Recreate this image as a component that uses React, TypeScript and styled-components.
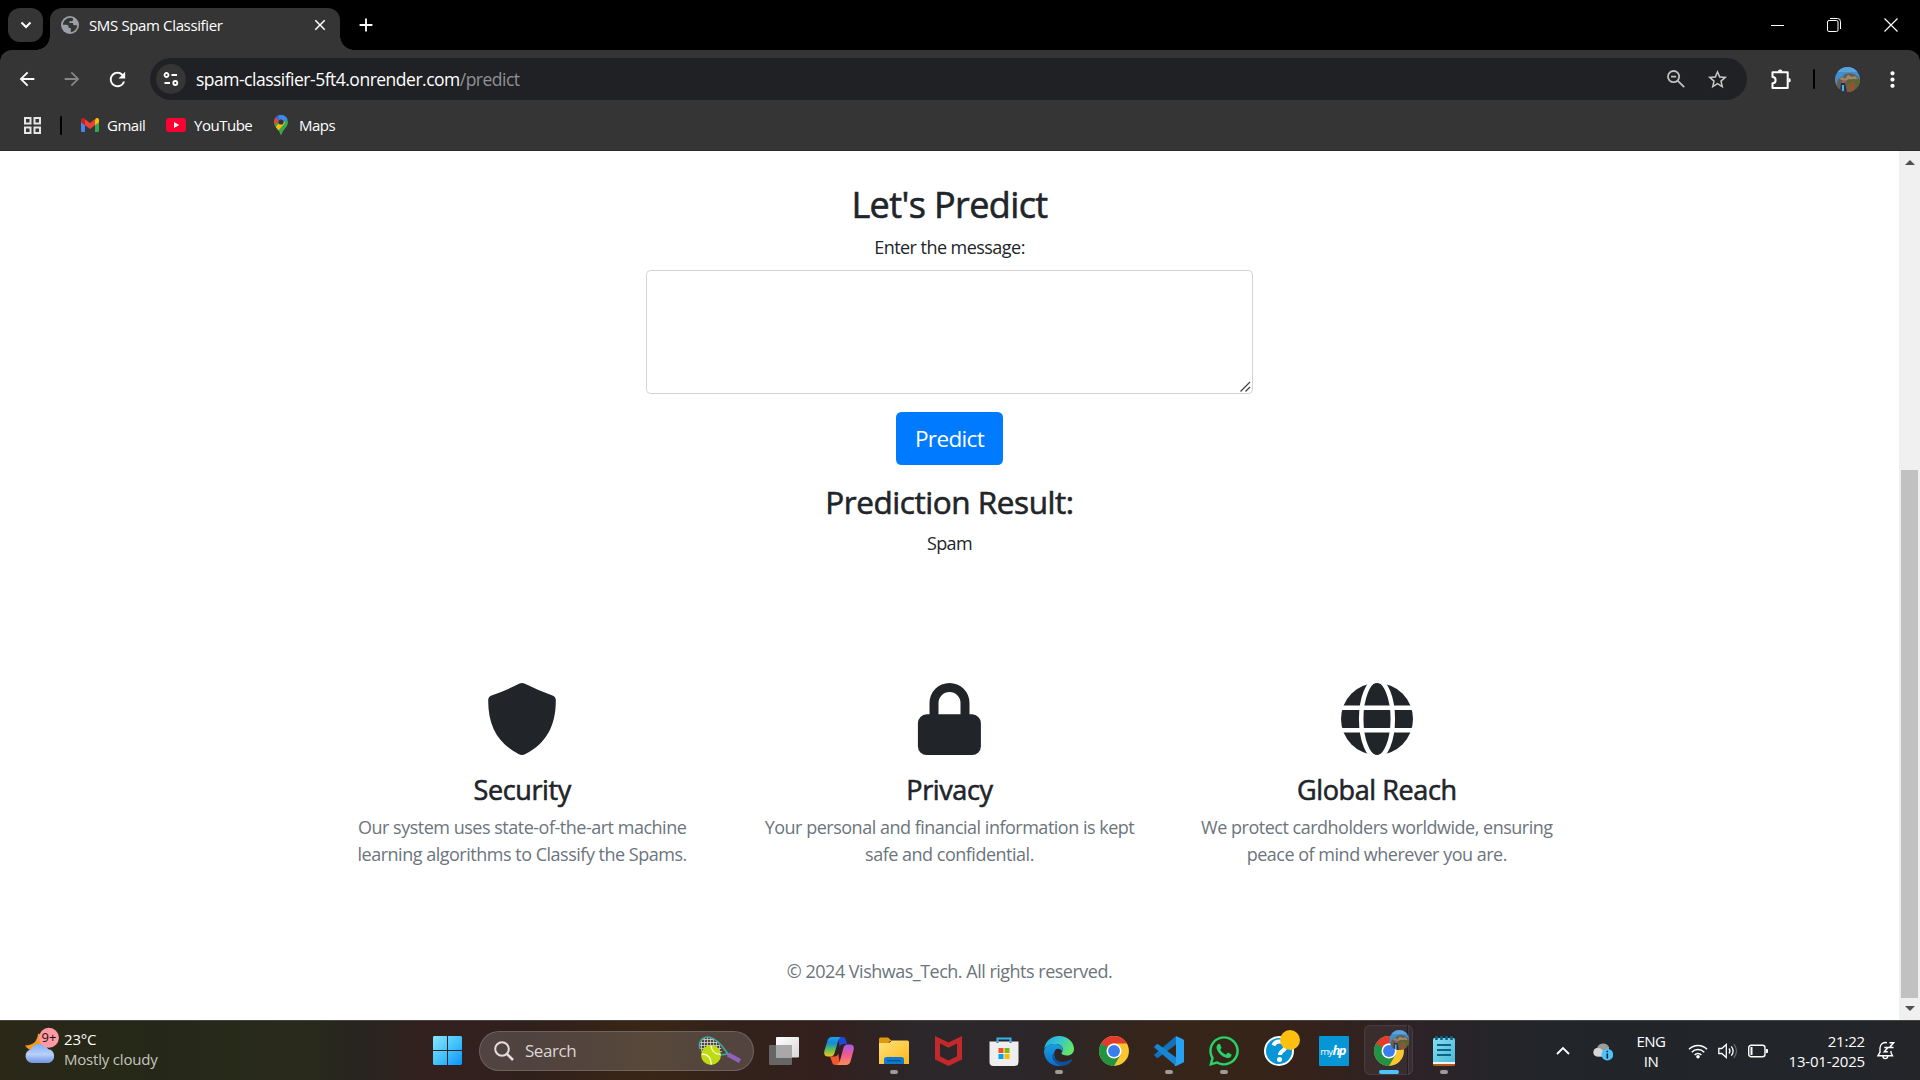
import React from 'react';
import styled, { createGlobalStyle } from 'styled-components';
import {
  MdArrowBack, MdArrowForward, MdRefresh, MdClose, MdAdd, MdStarBorder, MdMoreVert,
} from 'react-icons/md';
import { FaWhatsapp } from 'react-icons/fa';

const Global = createGlobalStyle`
  *, *::before, *::after { box-sizing: border-box; }
  body { margin: 0; background: #fff; font-family: "Open Sans", "Noto Sans", sans-serif; overflow: hidden; }
  svg { display: block; flex: none; }
`;

const Screen = styled.div`
  width: 1920px; height: 1080px; display: flex; flex-direction: column; overflow: hidden; background: #000;
`;

/* ---------- browser chrome ---------- */
const TabStrip = styled.div`
  height: 50px; background: #000; display: flex; padding: 8px 0 0 8px; align-items: flex-start;
`;
const TabSearch = styled.div`
  width: 35px; height: 34px; border-radius: 12px; background: #353535; color: #fff;
  display: flex; align-items: center; justify-content: center;
`;
const Tab = styled.div`
  position: relative; width: 290px; height: 42px; margin-left: 7px; background: #353535;
  border-radius: 12px 12px 0 0; display: flex; align-items: center; padding: 0 11px 8px 11px; color: #fff;
  &::before, &::after { content: ''; position: absolute; bottom: 0; width: 14px; height: 14px; }
  &::before { left: -14px; background: radial-gradient(circle at 0 0, transparent 13.5px, #353535 14px); }
  &::after { right: -14px; background: radial-gradient(circle at 100% 0, transparent 13.5px, #353535 14px); }
`;
const TabTitle = styled.span`
  flex: 1; margin-left: 10px; font-size: 15px; line-height: 20px; letter-spacing: -0.36px; white-space: nowrap;
`;
const NewTab = styled.div`
  margin-left: 14px; width: 24px; height: 34px; display: flex; align-items: center; justify-content: center; color: #fff;
`;
const WindowControls = styled.div`
  margin-left: auto; display: flex; height: 33px; align-items: center; gap: 43px; padding-right: 22px;
`;

const Toolbar = styled.div`
  height: 58px; background: #353535; border-radius: 12px 12px 0 0; display: flex; align-items: center; color: #fff;
  padding-left: 16px;
`;
const NavButtons = styled.div`
  display: flex; gap: 23px; width: 134px;
  svg:nth-child(2) { color: #858585; }
`;
const Omnibox = styled.div`
  width: 1597px; height: 42px; border-radius: 21px; background: #202124; display: flex; align-items: center;
  padding: 0 18px 0 6px;
`;
const SiteInfo = styled.div`
  width: 30px; height: 30px; border-radius: 50%; background: #353535; display: flex; align-items: center; justify-content: center;
`;
const Url = styled.div`
  flex: 1; margin-left: 10px; font-size: 17.5px; line-height: 24px; letter-spacing: -0.5px; color: #fff; white-space: nowrap;
  span { color: #8f9194; }
`;
const OmniActions = styled.div`
  display: flex; align-items: center; gap: 21px; color: #c7c7c7;
`;
const ToolbarActions = styled.div`
  display: flex; align-items: center; flex: 1; padding-left: 24px;
`;
const ToolbarDivider = styled.div<{ $h?: number }>`
  width: 2px; height: ${p => p.$h ?? 20}px; background: #000; border-radius: 1px;
`;
const ProfileGroup = styled.div`
  display: flex; align-items: center; gap: 20px; margin: 0 20px 0 21px;
`;

const Bookmarks = styled.div`
  height: 43px; background: #353535; display: flex; align-items: center; padding: 0 0 8px 22.5px; color: #fff;
  border-bottom: 1px solid #2b2b2b;
  ${ToolbarDivider} { margin: 0 19px 0 18.5px; }
`;
const Bookmark = styled.div<{ $w: number; $gap: number }>`
  display: flex; align-items: center; gap: ${p => p.$gap}px; width: ${p => p.$w}px;
  font-size: 15px; line-height: 20px; letter-spacing: -0.48px; white-space: nowrap;
`;

/* ---------- page ---------- */
const Viewport = styled.div` height: 869px; display: flex; background: #fff; `;
const Page = styled.main`
  width: 1899px; display: flex; flex-direction: column; align-items: center; padding-top: 32px;
  color: #212529; font-size: 18px; line-height: 27px;
`;
const Heading = styled.h2<{ $size: number; $ls: number }>`
  margin: 0 0 8px; font-size: ${p => p.$size}px; line-height: 1.2; font-weight: 400; letter-spacing: ${p => p.$ls}px;
  -webkit-text-stroke: 0.6px #212529; white-space: nowrap;
`;
const Label = styled.label` letter-spacing: -0.54px; margin-bottom: 9px; `;
const MessageField = styled.div` position: relative; width: 607px; height: 124px; margin-bottom: 18px; `;
const Message = styled.textarea`
  width: 100%; height: 100%; border: 1px solid #ced4da; border-radius: 4.5px; resize: none; background: #fff;
  display: block; margin: 0; padding: 7px 14px; font: inherit; overflow: auto;
`;
const ResizeGrip = styled.svg` position: absolute; right: 2px; bottom: 2px; `;
const PredictButton = styled.button`
  width: 107px; height: 53px; border: 0; border-radius: 5.4px; background: #007bff; color: #fff; padding: 0;
  font-family: inherit; font-size: 22.5px; line-height: 34px; letter-spacing: -0.65px; margin-bottom: 18px;
`;
const Result = styled.p` margin: 1px 0 0; letter-spacing: -0.65px; `;
const Features = styled.section`
  width: 1282px; display: grid; grid-template-columns: repeat(3, 1fr); margin-top: 126px;
`;
const Feature = styled.div`
  display: flex; flex-direction: column; align-items: center; text-align: center;
  > svg { margin-bottom: 19px; }
`;
const FeatureText = styled.p`
  margin: 0; width: 380px; color: #6c757d; letter-spacing: -0.49px;
`;
const Footer = styled.footer` margin-top: 90px; color: #6c757d; letter-spacing: -0.5px; `;

const ScrollTrack = styled.div`
  width: 21px; background: #f0f0f0; display: flex; flex-direction: column; align-items: center; padding: 9px 0;
`;
const ScrollArrow = styled.div<{ $down?: boolean }>`
  width: 0; height: 0; border-left: 5px solid transparent; border-right: 5px solid transparent;
  ${p => (p.$down ? 'border-top: 5px solid #505050; margin-top: auto;' : 'border-bottom: 5px solid #505050;')}
`;
const ScrollThumb = styled.div` width: 17px; height: 528px; margin-top: 305px; background: #c1c1c1; `;

/* ---------- taskbar ---------- */
const Taskbar = styled.div`
  height: 60px; border-top: 1px solid #45453f; display: flex; align-items: center; color: #fff; font-size: 15px; line-height: 20px;
  background: linear-gradient(90deg, #2b2818 0, #252818 150px, #292a1b 300px, #27251f 355px, #33211f 430px, #30201c 530px,
    #392616 650px, #33221b 730px, #33201e 830px, #2b272b 920px, #2b2629 1030px, #35251a 1150px, #372418 1240px,
    #33221c 1330px, #2e2228 1410px, #242529 1500px, #21252a 1600px, #232529 1920px);
`;
const Weather = styled.div` width: 420px; display: flex; padding: 6px 0 0 25px; height: 59px; `;
const WeatherText = styled.div`
  margin: 2px 0 0 3px; letter-spacing: -0.2px; width: 120px;
  span { display: block; } span + span { color: #c5c5bf; }
`;
const TaskButton = styled.div`
  position: relative; width: 55px; height: 59px; display: flex; align-items: center; justify-content: center;
  > svg { position: relative; }
`;
const ActivePlate = styled.div`
  position: absolute; left: 3px; top: 4px; width: 49px; height: 50px; border-radius: 6px;
  background: rgba(255,255,255,.05); border: 1px solid rgba(255,255,255,.08);
  &::after { content: ''; position: absolute; left: 42px; top: -1px; width: 6px; height: 50px;
    border-left: 1px solid rgba(0,0,0,.35); box-shadow: inset 1px 0 rgba(255,255,255,.07); }
`;
const Indicator = styled.div<{ $active?: boolean }>`
  position: absolute; bottom: 6px; left: 50%; transform: translateX(-50%); height: 4px; border-radius: 2px;
  width: ${p => (p.$active ? 20 : 8)}px; background: ${p => (p.$active ? '#4cc2ff' : '#9f9b99')};
`;
const SearchBox = styled.div`
  width: 275px; height: 40px; border-radius: 20px; margin: 0 2px 0 4px; display: flex; align-items: center;
  background: rgba(255,255,255,.155); border: 1px solid rgba(255,255,255,.16); padding: 0 11px 0 14px;
  font-size: 17px; color: #dcd6d4; letter-spacing: -0.45px;
  span { flex: 1; margin-left: 11px; }
`;
const Tray = styled.div` margin-left: auto; display: flex; align-items: center; height: 59px; padding-right: 25px; `;
const OneDrive = styled.svg` margin: 3px 0 0 23px; `;
const TrayIcons = styled.div` display: flex; align-items: center; gap: 10px; margin: 0 20px 0 19px; `;
const Lang = styled.div` width: 36px; text-align: center; letter-spacing: -0.5px; margin-left: 20px; span { display: block; } `;
const Clock = styled.div`
  width: 77px; text-align: right; letter-spacing: -0.18px; margin-right: 12px; white-space: nowrap; span { display: block; }
`;

/* ---------- drawings ---------- */
const TabGlobe = () => (
  <svg width="18" height="18" viewBox="0 0 18 18">
    <circle cx="9" cy="9" r="9" fill="#9aa0a6" />
    <path d="M9.500 1.700c-4 0-7.300 3-7.600 7h3.500c1.300 0 2.200.8 2.200 2v1.300H9.800v4.300c3.400-.5 6.200-3.200 6.400-7h-2.700c-1.200 0-1.500-.7-1.500-1.700V7H8.300V5.200h2.400c.8 0 1.200-.6 1.200-1.200V2.200z" fill="#353535" />
  </svg>
);
const ZoomOut = () => (
  <svg width="18" height="18" viewBox="0 0 18 18" fill="none" stroke="#c0c0c0" strokeWidth="1.800">
    <circle cx="6.600" cy="6.600" r="5.600" /><path d="m10.600 10.600 6.600 6.600M4 6.600h5.200" />
  </svg>
);
const Puzzle = () => (
  <svg width="21" height="21" viewBox="0 0 21 21">
    <path d="M1.500 3.300h15.200v15.600H1.500v-4.600a3.100 3.100 0 0 0 0-6.200z" fill="none" stroke="#fff" strokeWidth="2" strokeLinejoin="round" />
    <path d="M6.900 2.800a2.300 2.300 0 0 1 4.600 0zM17.500 8.900a2.300 2.300 0 0 1 0 4.600z" fill="#fff" />
  </svg>
);

const Avatar = ({ id, size = 25 }: { id: string; size?: number }) => (
  <svg width={size} height={size} viewBox="0 0 25 25">
    <clipPath id={id}><circle cx="12.5" cy="12.5" r="12.5" /></clipPath>
    <g clipPath={`url(#${id})`}>
      <rect width="25" height="25" fill="#3f8fd2" />
      <rect width="25" height="5" fill="#5aa2dc" />
      <path d="M2 16 3 12l4-2 3-3 5-1 4 1 4 3 3 4v11H2z" fill="#6b5e4c" />
      <path d="m4 12 4-2 2 2 3-4 4 2 3-1 3 3-5 1-4-1-4 2-3-1z" fill="#998a6e" />
      <path d="m12 14 6-2 7 1v12H13z" fill="#56682f" />
      <path d="m13 17 5-3 3 3-2 8h-7z" fill="#8a5636" />
      <path d="M6 16h4l2 9H5z" fill="#232e5b" />
      <path d="M7 18h2v6H7z" fill="#54b8c6" />
      <circle cx="8.5" cy="14.5" r="1.6" fill="#a2605d" />
    </g>
  </svg>
);

const Chrome = ({ children }: { children?: React.ReactNode }) => (
  <svg width="30" height="30" viewBox="0 0 48 48" overflow="visible">
    <circle cx="24" cy="24" r="23.9" fill="#fbc52d" />
    <path d="M3.200 12 24 24v12l-6 11.200A24 24 0 0 1 3.200 12z" fill="#229342" />
    <path d="M13.600 30 24 36h.500l10-6L24 48q-3 0-6-.8z" fill="#229342" />
    <path d="M3.200 12a24 24 0 0 1 41.600 0H24a12 12 0 0 0-10.400 6l-.5 1z" fill="#e33b2e" />
    <path d="M3.200 12 13.600 30 14 18z" fill="#229342" />
    <circle cx="24" cy="24" r="12" fill="#fff" />
    <circle cx="24" cy="24" r="9.5" fill="#3b7ded" />
    {children}
  </svg>
);

const Gmail = () => (
  <svg width="18" height="14" viewBox="0 0 18 14">
    <path d="M0 2v10.8Q0 14 1.2 14H4V5.5z" fill="#4285f4" />
    <path d="M18 2v10.8q0 1.2-1.2 1.2H14V5.5z" fill="#34a853" />
    <path d="M14 2v5.2l4-3V2c0-2-2-2.6-3.300-1.500z" fill="#fbbc04" />
    <path d="M4 7.200V1.200l5 3.800 5-3.800v6l-5 3.900z" fill="#ea4335" />
    <path d="M0 2v2.200l4 3V1.200L3.300.5C2 -.6 0 0 0 2z" fill="#c5221f" />
  </svg>
);
const YouTube = () => (
  <svg width="20" height="14" viewBox="0 0 20 14"><rect width="20" height="14" rx="3" fill="#f03" /><path d="M8 4v6l5.200-3z" fill="#fff" /></svg>
);
const Maps = () => (
  <svg width="14" height="20" viewBox="0 0 14 20">
    <clipPath id="pin"><path d="M7 0a7 7 0 0 1 7 7c0 3-1.600 5-3.500 7.200C8.700 16.400 8 18 7.500 19.500q-.5 1-1 0C6 18 5.300 16.400 3.500 14.200 1.600 12 0 10 0 7a7 7 0 0 1 7-7z" /></clipPath>
    <g clipPath="url(#pin)">
      <rect width="14" height="20" fill="#34a853" />
      <path d="M0 14 9 3.500 11 8 3 17z" fill="#fbbc04" />
      <path d="M0 0h5l2 5-7 5z" fill="#ea4335" />
      <path d="M1.500 2.500 5 5.500 8 0H3z" fill="#1a73e8" />
      <path d="M5 0h9v4L8.500 8 5 5.500z" fill="#4285f4" />
    </g>
    <circle cx="7" cy="7" r="2.600" fill="#353535" />
  </svg>
);

const Shield = () => (
  <svg width="72" height="72" viewBox="0 0 72 72">
    <path fill="#212529" d="M33.500.6Q36-.5 38.500.6 52 7.500 66.500 12.500 69.700 13.800 69.800 17C70 43 60 60.500 39.500 71Q36 72.800 32.500 71C12 60.500 2 43 2.200 17Q2.300 13.800 5.500 12.500 20 7.500 33.500.6z" />
  </svg>
);
const Lock = () => (
  <svg width="72" height="72" viewBox="0 0 72 72" fill="#212529">
    <rect x="4.900" y="31.300" width="63" height="40.700" rx="8.800" />
    <path d="M16.500 32V20a20 20 0 0 1 40 0v12H47.500V20a11 11 0 0 0-22 0v12z" />
  </svg>
);
const Globe = () => (
  <svg width="72" height="72" viewBox="0 0 72 72">
    <circle cx="36" cy="36" r="36" fill="#212529" />
    <g fill="none" stroke="#fff" strokeWidth="4.500"><ellipse cx="36" cy="36" rx="15.800" ry="38.500" /><path d="M0 24.700h72M0 47.300h72" /></g>
  </svg>
);

const WeatherIcon = () => (
  <svg width="36" height="40" viewBox="0 0 36 40">
    <defs><linearGradient id="cl" x2="0" y2="1"><stop stopColor="#82aef5" /><stop offset=".55" stopColor="#b9d0fa" /><stop offset="1" stopColor="#6f93e6" /></linearGradient></defs>
    <path d="M13 6.500c-.5 7-4 12-13 12 3 5 10 7 16 4 5-2 7-7 6-12z" fill="#f49a22" />
    <path d="M7 36a7 7 0 0 1-1-13.800C7 19.500 10 17 14.500 17c4.500 0 7.500 2 8.500 5a7.200 7.200 0 0 1 1 14z" fill="url(#cl)" />
    <circle cx="23.900" cy="10.700" r="10" fill="#ff99a4" />
    <text x="24" y="15.300" textAnchor="middle" fontFamily="Open Sans, sans-serif" fontSize="13" fill="#1c1010">9+</text>
  </svg>
);
const StartIcon = () => (
  <svg width="29" height="29" viewBox="0 0 29 29">
    <defs><linearGradient id="win" x2="1" y2="1"><stop stopColor="#8be3ff" /><stop offset=".5" stopColor="#45c5fc" /><stop offset="1" stopColor="#0a93fa" /></linearGradient></defs>
    <path d="M1 0h13v14H0V1zM15 0h13l1 1v13H15zM0 15h14v14H1l-1-1zM15 15h14v13l-1 1H15z" fill="url(#win)" />
  </svg>
);
const Racket = () => (
  <svg width="44" height="30" viewBox="0 0 44 30">
    <defs><pattern id="net" width="3" height="3" patternUnits="userSpaceOnUse"><path d="M0 0h3M0 0v3" stroke="#ddd" strokeWidth="1.400" /></pattern></defs>
    <path d="M2 13C0 6 4 1 10 1c6 0 10 5 13 10l1 6-9-1-9 3z" fill="url(#net)" />
    <path d="M2 13C0 6 4 1 10 1c6 0 10 5 14 9l6 8c-6 1-9 2-14-1" fill="none" stroke="#3fa99f" strokeWidth="1.600" />
    <path d="m30 18.500 12 6.500" stroke="#9460bd" strokeWidth="4.500" />
    <circle cx="13" cy="19" r="10" fill="#bfdc13" />
    <path d="M13 9.500c.5 5 3 8.500 9.500 9M4 18c6 0 9 4 9.500 10.500" stroke="#f5ffd8" strokeWidth="1.300" fill="none" />
  </svg>
);
const TaskView = () => (
  <svg width="30" height="28" viewBox="0 0 30 28">
    <defs><linearGradient id="tv" x2="1" y2="1"><stop stopColor="#fff" /><stop offset="1" stopColor="#d8d8d8" /></linearGradient></defs>
    <rect y="8" width="23" height="20" rx="1" fill="#666" /><rect x="7" width="23" height="20.500" rx="1" fill="url(#tv)" /><path d="M7 8h16v12.500H7z" fill="#a9a7a7" />
  </svg>
);
const Copilot = () => (
  <svg width="30" height="28" viewBox="0 0 30 28">
    <defs>
      <linearGradient id="cpa" x2="0" y2="1"><stop stopColor="#16a6ef" /><stop offset=".3" stopColor="#1688d9" /><stop offset=".6" stopColor="#4dbb69" /><stop offset="1" stopColor="#f2c61b" /></linearGradient>
      <linearGradient id="cpb" x2="0" y2="1"><stop stopColor="#a45bf0" /><stop offset=".5" stopColor="#ef5a90" /><stop offset="1" stopColor="#fb8f55" /></linearGradient>
    </defs>
    <path d="M14 0h4.500c2 0 3 1 3.500 3l1 4h-3.500c-2 0-3.200 1-3.800 3z" fill="#1b4ad9" />
    <path d="M16 28h-4.500c-2 0-3-1-3.500-3l-2-5.500h4.500c2 0 3.200-1 3.800-3z" fill="#f2582f" />
    <path d="M8 0h9c-2 1-2.600 3-3.300 5.500l-3 10c-.6 2.500-2 4-4.200 4H4C.5 19.500-.5 17 .5 13.500l3-10C4.200 1.500 5.500 0 8 0z" fill="url(#cpa)" />
    <path d="M22 28h-9c2-1 2.600-3 3.300-5.500l3-11c.6-2.500 2-4 4.200-4H26c3.500 0 4.500 2.500 3.500 6l-3 11C25.800 26.500 24.500 28 22 28z" fill="url(#cpb)" />
  </svg>
);
const Explorer = () => (
  <svg width="30" height="28" viewBox="0 0 30 28">
    <defs><linearGradient id="fo" x2="1" y2="1"><stop stopColor="#ffe07a" /><stop offset="1" stopColor="#fbb91a" /></linearGradient></defs>
    <path d="M0 2q0-1.500 1.500-1.500h7.500L13 4h-2L8 8H0z" fill="#dc9a0c" />
    <path d="M0 6h10l3-2.500h15.500Q30 3.500 30 5v22H0z" fill="url(#fo)" />
    <path d="M5 27v-4.500Q5 20 7.500 20h15Q25 20 25 22.500V27z" fill="#0f7ad0" /><path d="M8 23.700h14" stroke="#0b4f8f" strokeWidth="1.200" />
  </svg>
);
const McAfee = () => (
  <svg width="27" height="30" viewBox="0 0 27 30"><path fill="#c3282b" fillRule="evenodd" d="M0 0l13.500 6.500L27 0v23.500L13.500 30 0 23.500zM5 7.500v12.800l8.500 4.200 8.500-4.200V7.500l-8.500 4.300z" /></svg>
);
const Store = () => (
  <svg width="30" height="30" viewBox="0 0 30 30">
    <path d="M8.500 8V2.500h13V8" fill="none" stroke="#35b4ea" strokeWidth="2" />
    <path d="M.5 5.500h29V26q0 4-4 4H4.500q-4 0-4-4z" fill="#eee" /><path d="M8.500 5.500V7M21.500 5.500V7" stroke="#1686c4" strokeWidth="2" />
    <path d="M9.500 12h5v5h-5z" fill="#f25022" /><path d="M15.500 12h5v5h-5z" fill="#7fba00" /><path d="M9.500 18h5v5h-5z" fill="#00a4ef" /><path d="M15.500 18h5v5h-5z" fill="#ffb900" />
  </svg>
);
const Edge = () => (
  <svg width="30" height="30" viewBox="0 0 30 30">
    <defs>
      <linearGradient id="e1" x2="1" y2=".4"><stop stopColor="#23a5e0" /><stop offset=".5" stopColor="#32c5d4" /><stop offset="1" stopColor="#62e36b" /></linearGradient>
      <linearGradient id="e2" x2="0" y2="1"><stop stopColor="#1b9de2" /><stop offset="1" stopColor="#0c6dc9" /></linearGradient>
    </defs>
    <path d="M.3 13C1 5.500 7 0 15 0c8.500 0 15 6 15 13 0 4-3 6.500-7 6.500-3.500 0-5.500-1.200-5.500-2.300 0-.9 1.300-1.400 1.300-3.700C18.800 10 15 8 11 8 6 8 2 10 .3 13z" fill="url(#e1)" />
    <path d="M0 15C1 10 5.500 8 10.500 8c4.500 0 8.300 2.500 8.300 5.500 0 1-.3 1.800-.6 2.300-.8-2.300-2.700-3.300-4.700-3-3 .5-4 4-3 8 1 4 4.500 7.500 9 8.200-2 .9-4 1-5 1C6.500 30 0 23.500 0 15z" fill="url(#e2)" />
    <path d="M10.300 17c-1 7 4.500 9.500 9 9 3-.3 6-1.600 7.700-2.500.9-.4 1.300.2.900.9-2 3.200-5.500 5-8.900 5.300-6 .5-10.700-5-10.700-9.700 0-1.200.6-2.500 2-3z" fill="#11509f" />
  </svg>
);
const VSCode = () => (
  <svg width="30" height="30" viewBox="0 0 30 30">
    <path d="M22 0v8.500L4.200 21.800q-.8.500-1.500-.1L.6 19.800q-.8-.8 0-1.600z" fill="#1372b8" />
    <path d="M22 30v-8.500L4.200 8.200q-.8-.5-1.500.1L.6 10.200q-.8.800 0 1.600z" fill="#1787d4" />
    <path d="M22 0l7 3.200q1 .5 1 1.600v20.400q0 1.100-1 1.600L22 30q-1 .2-1.500-.5L22 27z" fill="#27a2f0" />
  </svg>
);
const Help = () => (
  <svg width="30" height="30" viewBox="0 0 30 30" overflow="visible">
    <circle cx="15" cy="15" r="14" fill="#0796d7" stroke="#fff" strokeWidth="2" />
    <path d="M9.500 9.500c1-3 3.500-4 6-4 3.500 0 6 1.800 6 5 0 4.500-5.500 4-5.500 8.500" fill="none" stroke="#fff" strokeWidth="4" /><circle cx="15.500" cy="23.500" r="2.500" fill="#fff" />
    <circle cx="26" cy="4" r="10" fill="#fdc010" />
  </svg>
);
const HpTile = styled.div`
  width: 30px; height: 30px; border-radius: 1px; background: #0695d5; color: #fff;
  display: flex; align-items: baseline; justify-content: center; line-height: 28px; white-space: nowrap;
  font-size: 9.5px; letter-spacing: -0.6px;
  b { font-size: 13px; font-style: italic; letter-spacing: -1.6px; padding-right: 2px; }
`;
const Notepad = () => (
  <svg width="22" height="30" viewBox="0 0 22 30">
    <defs><linearGradient id="np" x2="1" y2="1"><stop stopColor="#84def0" /><stop offset="1" stopColor="#4bb9d8" /></linearGradient></defs>
    <path d="M0 27h22v1.500Q22 30 20.500 30h-19Q0 30 0 28.500z" fill="#b35a17" /><path d="M0 25h22v3H0z" fill="#f3f3f3" />
    <path d="M0 3.500Q0 2 1.500 2h19Q22 2 22 3.500V26H0z" fill="url(#np)" />
    <path d="M3.500 0v4M8.500 0v4M13.500 0v4M18.500 0v4" stroke="#0c6380" strokeWidth="2.600" /><path d="M4 9h14M4 14h14M4 19h14" stroke="#0a6486" strokeWidth="1.800" />
  </svg>
);

type App = { name: string; icon: React.ReactNode; running?: boolean; active?: boolean };
const apps: App[] = [
  { name: 'taskview', icon: <TaskView /> },
  { name: 'copilot', icon: <Copilot /> },
  { name: 'explorer', icon: <Explorer />, running: true },
  { name: 'mcafee', icon: <McAfee /> },
  { name: 'store', icon: <Store /> },
  { name: 'edge', icon: <Edge />, running: true },
  { name: 'chrome', icon: <Chrome /> },
  { name: 'vscode', icon: <VSCode />, running: true },
  { name: 'whatsapp', icon: <FaWhatsapp size={34} color="#25d366" />, running: true },
  { name: 'help', icon: <Help /> },
  { name: 'myhp', icon: <HpTile>my<b>hp</b></HpTile> },
  {
    name: 'chrome-profile', running: true, active: true,
    icon: <Chrome><g transform="translate(24.500 -9.500)"><Avatar id="badge" size={32} /></g></Chrome>,
  },
  { name: 'notepad', icon: <Notepad />, running: true },
];

const features = [
  { icon: <Shield />, title: 'Security', text: 'Our system uses state-of-the-art machine learning algorithms to Classify the Spams.' },
  { icon: <Lock />, title: 'Privacy', text: 'Your personal and financial information is kept safe and confidential.' },
  { icon: <Globe />, title: 'Global Reach', text: 'We protect cardholders worldwide, ensuring peace of mind wherever you are.' },
];

export default function App() {
  return (
    <Screen>
      <Global />
      <TabStrip>
        <TabSearch><svg width="12" height="8" viewBox="0 0 12 8"><path d="m1.500 1.500 4.500 4.500 4.500-4.500" fill="none" stroke="#fff" strokeWidth="2" /></svg></TabSearch>
        <Tab>
          <TabGlobe />
          <TabTitle>SMS Spam Classifier</TabTitle>
          <MdClose size={18} />
        </Tab>
        <NewTab><MdAdd size={22} /></NewTab>
        <WindowControls>
          <svg width="13" height="14" viewBox="0 0 13 14"><path d="M0 7.500h13" stroke="#fff" /></svg>
          <svg width="14" height="14" viewBox="0 0 14 14" fill="none" stroke="#fff"><rect x=".5" y="2.500" width="10.500" height="11" rx="1.500" /><path d="M3 .5h7.500q3 0 3 3v7.500" /></svg>
          <svg width="14" height="14" viewBox="0 0 14 14"><path d="m.5.5 13 13m0-13-13 13" stroke="#fff" strokeWidth="1.200" /></svg>
        </WindowControls>
      </TabStrip>

      <Toolbar>
        <NavButtons><MdArrowBack size={22} /><MdArrowForward size={22} /><MdRefresh size={23} /></NavButtons>
        <Omnibox>
          <SiteInfo>
            <svg width="16" height="14" viewBox="0 0 16 14" fill="none" stroke="#fff" strokeWidth="1.800"><circle cx="3.500" cy="3" r="2" /><path d="M8.500 3H14M1.500 11H7" /><circle cx="12.300" cy="11" r="2" /></svg>
          </SiteInfo>
          <Url>spam-classifier-5ft4.onrender.com<span>/predict</span></Url>
          <OmniActions><ZoomOut /><MdStarBorder size={23} /></OmniActions>
        </Omnibox>
        <ToolbarActions>
          <Puzzle />
          <ProfileGroup><ToolbarDivider /><Avatar id="profile" /></ProfileGroup>
          <MdMoreVert size={25} />
        </ToolbarActions>
      </Toolbar>

      <Bookmarks>
        <svg width="19" height="19" viewBox="0 0 19 19" fill="none" stroke="#e6e6e6" strokeWidth="2"><path d="M2 2h5.500v5.500H2zM11.500 2H17v5.500h-5.500zM2 11.500h5.500V17H2zM11.500 11.500H17V17h-5.500z" /></svg>
        <ToolbarDivider $h={19} />
        <Bookmark $w={85} $gap={8}><Gmail />Gmail</Bookmark>
        <Bookmark $w={108} $gap={8}><YouTube />YouTube</Bookmark>
        <Bookmark $w={80} $gap={11}><Maps />Maps</Bookmark>
      </Bookmarks>

      <Viewport>
        <Page>
          <Heading $size={36} $ls={-0.6}>Let's Predict</Heading>
          <Label>Enter the message:</Label>
          <MessageField>
            <Message />
            <ResizeGrip width="11" height="11" viewBox="0 0 11 11"><path d="M.5 10.500 10 1M5.500 10.500 10 6" stroke="#444" strokeWidth="1.300" /></ResizeGrip>
          </MessageField>
          <PredictButton>Predict</PredictButton>
          <Heading as="h3" $size={31.5} $ls={-0.45}>Prediction Result:</Heading>
          <Result>Spam</Result>
          <Features>
            {features.map(f => (
              <Feature key={f.title}>
                {f.icon}
                <Heading as="h4" $size={27} $ls={-0.4}>{f.title}</Heading>
                <FeatureText>{f.text}</FeatureText>
              </Feature>
            ))}
          </Features>
          <Footer>© 2024 Vishwas_Tech. All rights reserved.</Footer>
        </Page>
        <ScrollTrack><ScrollArrow /><ScrollThumb /><ScrollArrow $down /></ScrollTrack>
      </Viewport>

      <Taskbar>
        <Weather>
          <WeatherIcon />
          <WeatherText><span>23°C</span><span>Mostly cloudy</span></WeatherText>
        </Weather>
        <TaskButton><StartIcon /></TaskButton>
        <SearchBox>
          <svg width="20" height="20" viewBox="0 0 20 20" fill="none" stroke="#e4dfdd" strokeWidth="2"><circle cx="8" cy="8" r="6.800" /><path d="m13 13 6 6" strokeWidth="2.600" /></svg>
          <span>Search</span>
          <Racket />
        </SearchBox>
        {apps.map(a => (
          <TaskButton key={a.name}>
            {a.active && <ActivePlate />}
            {a.icon}
            {a.running && <Indicator $active={a.active} />}
          </TaskButton>
        ))}
        <Tray>
          <svg width="14" height="9" viewBox="0 0 14 9"><path d="m1 8 6-6 6 6" fill="none" stroke="#fff" strokeWidth="1.800" /></svg>
          <OneDrive width="20" height="18" viewBox="0 0 20 18">
            <path d="M4 13.500a4.300 4.300 0 0 1 0-8.500A6.500 6.500 0 0 1 16 4v9.500z" fill="#9b9b9b" /><path d="M4 13.500a4.300 4.300 0 0 1 1-8.500c3 0 4 2 6 4l-2 4.500z" fill="#d5d5d5" />
            <circle cx="14.300" cy="11.700" r="5.900" fill="#4cc2ff" /><path d="M14.300 10.500v5M14.300 7.800v1.500" stroke="#12232e" strokeWidth="1.600" />
          </OneDrive>
          <Lang><span>ENG</span><span>IN</span></Lang>
          <TrayIcons>
            <svg width="20" height="16" viewBox="0 0 20 16" fill="none" stroke="#fff" strokeWidth="1.500"><path d="M1 6.300a12.600 12.600 0 0 1 18 0M3.800 9.200a8.700 8.700 0 0 1 12.400 0M6.600 12a4.700 4.700 0 0 1 6.800 0" /><circle cx="10" cy="13.800" r="1.800" fill="#fff" stroke="none" /></svg>
            <svg width="20" height="16" viewBox="0 0 20 16" fill="none" stroke="#fff" strokeWidth="1.300"><path d="M.8 5.500h3L8.300 1.500v13L3.800 10.500h-3z" /><path d="M11 5.500q2 2.500 0 5M13.300 3.300q3.600 4.700 0 9.400" /><path d="M15.800 1.200q5.400 6.800 0 13.600" stroke="#666" /></svg>
            <svg width="20" height="14" viewBox="0 0 20 14"><rect x=".7" y="1.200" width="16.300" height="11.600" rx="2.500" fill="none" stroke="#fff" strokeWidth="1.400" /><path d="M2.500 3h2v8h-2zM18 5h1.200q.8 0 .8 1v2q0 1-.8 1H18z" fill="#fff" /></svg>
          </TrayIcons>
          <Clock><span>21:22</span><span>13-01-2025</span></Clock>
          <svg width="18" height="19" viewBox="0 0 18 19" fill="none" stroke="#fff" strokeWidth="1.400"><path d="M10 1.700C6 1 3 3.500 3 7v4.200L1 14.700h14.500l-1.500-3V10M5.800 15c.3 3.500 4.700 3.500 5 0" /><path d="M12.500 1.800h4l-4 4.700h4M7.300 6.500h3.500l-3.500 4.300h3.500" strokeWidth="1.500" /></svg>
        </Tray>
      </Taskbar>
    </Screen>
  );
}
